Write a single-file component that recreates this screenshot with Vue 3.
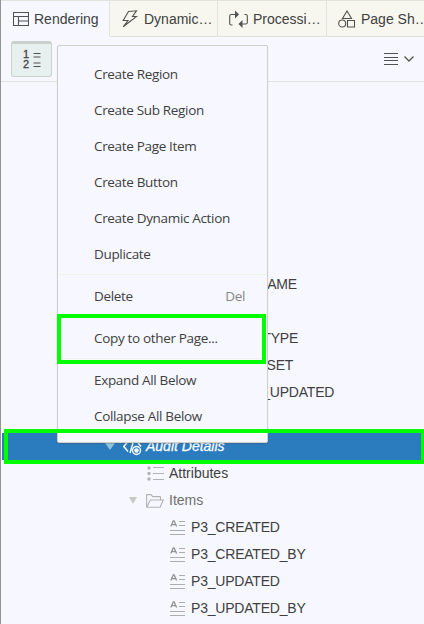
<script setup>
const tabs = [
  { label: 'Rendering', icon: 'layout', active: true },
  { label: 'Dynamic…', icon: 'bolt' },
  { label: 'Processi…', icon: 'process' },
  { label: 'Page Sh…', icon: 'shapes' },
]
const covered = ['P3_NAME', '', 'P3_TYPE', 'P3_ASSET', 'LAST_UPDATED', '']
const items = ['P3_CREATED', 'P3_CREATED_BY', 'P3_UPDATED', 'P3_UPDATED_BY']
const groups = [
  [
    { label: 'Create Region' },
    { label: 'Create Sub Region' },
    { label: 'Create Page Item' },
    { label: 'Create Button' },
    { label: 'Create Dynamic Action' },
    { label: 'Duplicate' },
  ],
  [{ label: 'Delete', key: 'Del' }],
  [{ label: 'Copy to other Page...' }],
  [{ label: 'Expand All Below' }, { label: 'Collapse All Below' }],
]
</script>

<template>
  <div class="page">
    <nav class="tabs">
      <div v-for="t in tabs" :key="t.label" class="tab" :class="[t.icon, { active: t.active }]">
        <svg v-if="t.icon === 'layout'" width="16" height="14" viewBox="0 0 16 14">
          <path d="M.5.5h15v13H.5zM.5 4.5h15M5.5 4.5v9M5.5 9h10" />
        </svg>
        <svg v-else-if="t.icon === 'bolt'" width="16" height="18" viewBox="0 0 16 18">
          <path d="M6.500 1.500 14.500.8 10.500 6.500h4L1.200 16.800 6 10.500H1.200z" />
        </svg>
        <svg v-else-if="t.icon === 'process'" width="19" height="18" viewBox="0 0 19 18">
          <path d="M3.500 15H2.200Q.7 15 .7 13.500V6Q.7 4.500 2.200 4.500H7M15.500 4.500H16.800Q18.300 4.500 18.300 6V12.500Q18.300 14 16.800 14H13" />
          <path class="solid" d="M6 .5v8l4-4zM13.500 10v8l-4-4z" />
        </svg>
        <svg v-else width="18" height="18" viewBox="0 0 18 18">
          <path d="M9 1 13.500 8.500h-9zM9.500 10.500h7v6.500h-7z" /><circle cx="4.200" cy="13.500" r="3.500" />
        </svg>
        <span>{{ t.label }}</span>
      </div>
    </nav>

    <div class="toolbar">
      <button class="sort">
        <svg width="19" height="20" viewBox="0 0 19 20">
          <text x="0" y="8.500">1</text><text x="0" y="19">2</text>
          <path d="M10.500 4.500h7M10.500 8h7M10.500 14h7M10.500 17.500h7" />
        </svg>
      </button>
      <div class="view">
        <svg width="31" height="14" viewBox="0 0 31 14">
          <path d="M0 1.500h14M0 5.500h14M0 8.500h14M0 12.500h14" />
          <path class="chev" d="M20.500 4.500 25 9l4.500-4.500" />
        </svg>
      </div>
    </div>

    <div class="tree">
      <div v-for="(c, i) in covered" :key="i" class="row caps" :class="'hidden' + i"><span>{{ c }}</span></div>
      <div class="row selected">
        <i class="tri"></i>
        <svg width="20" height="17" viewBox="0 0 20 17">
          <path d="M5 2.500.8 7.500 5 12.500M14 2.500l4 5M11 .8 7 14" />
          <circle cx="13.500" cy="11.500" r="4" /><circle cx="13.500" cy="11.500" r="1.600" class="dot" />
        </svg>
        <span>Audit Details</span>
      </div>
      <div class="row attributes">
        <svg width="17" height="15" viewBox="0 0 17 15">
          <path d="M6 1.500h11M6 7.500h11M6 13.500h11" />
          <circle cx="2" cy="2" r="1.700" /><circle cx="2" cy="7.500" r="1.700" /><circle cx="2" cy="13" r="1.700" />
        </svg>
        <span>Attributes</span>
      </div>
      <div class="row folder">
        <i class="tri"></i>
        <svg width="18" height="14" viewBox="0 0 18 14">
          <path d="M.6 13.300V1.200Q.6.600 1.200.6H5l1.800 2h7q.7 0 .7.700V6M.8 13.300 4.300 6H17.300l-3.200 7.300z" />
        </svg>
        <span>Items</span>
      </div>
      <div v-for="it in items" :key="it" class="row item caps">
        <svg width="15" height="16" viewBox="0 0 15 16">
          <path class="letter" d="M.8 6.500 3.300.8h.8L6.600 6.500M1.800 4.700h4" />
          <path d="M9 1.500h6M9 5.500h6M0 10.500h15M0 14.500h15" />
        </svg>
        <span>{{ it }}</span>
      </div>
    </div>

    <div class="menu">
      <div v-for="(g, i) in groups" :key="i" class="group">
        <div v-for="m in g" :key="m.label" class="entry">
          <span>{{ m.label }}</span><kbd v-if="m.key">{{ m.key }}</kbd>
        </div>
      </div>
    </div>
    <div class="mark mark-copy"></div>
    <div class="mark mark-row"></div>
  </div>
</template>

<style>
body { margin: 0; overflow: hidden; }
</style>

<style scoped>
* { box-sizing: border-box; }
.page { position: relative; width: 424px; height: 624px; overflow: hidden; background: #f7f8ff; border-left: 1px solid #929292; font: 14px "Liberation Sans", Arial, sans-serif; color: #404040; }
svg { display: block; flex: none; fill: none; stroke: #50534f; stroke-width: 1.1; }
.tabs { display: flex; height: 37px; border-top: 1px solid #e3e3dc; }
.tab { display: flex; align-items: center; width: 109px; flex: none; padding-left: 12px; gap: 5px; background: #f7f7ef; border-right: 1px solid #e3e3dc; border-bottom: 1px solid #e3e3dc; white-space: nowrap; }
.tab.active { background: #f7f8ff; border-bottom-color: #f7f8ff; }
.tab.bolt { width: 108px; }
.tab.process, .tab.shapes { padding-left: 11px; }
.tab.bolt svg, .tab.process svg { margin-right: 1px; }
.tab.process svg { margin-right: 0; }
.solid { fill: #50534f; stroke: none; }
.toolbar { display: flex; justify-content: space-between; height: 45px; padding: 4px 10px 0; border-bottom: 1px solid #e2e3df; }
.sort { display: flex; width: 41px; height: 36px; padding: 5px 0 0 11px; border: 1px solid #cbd0ce; border-top: 3px solid #cbcfce; border-radius: 3px; background: #e7efef; }
.sort svg text { fill: #444; stroke: #444; stroke-width: .3px; font: 11px "Liberation Sans", Arial, sans-serif; }
.view { padding: 11px 0 0; margin-right: -1px; }
.chev { stroke-width: 1.3; }
.tree { padding-top: 189px; }
.row { display: flex; align-items: center; height: 27px; white-space: nowrap; }
.row span { padding-bottom: 2px; }
.caps span { letter-spacing: -.2px; }
.hidden0 { padding-left: 232px; }
.hidden2 { padding-left: 237px; }
.hidden3 { padding-left: 223px; }
.hidden4 { padding-left: 227px; }
.selected { margin-left: 1px; padding-left: 103px; background: #2b7bbf; color: #fff; font-style: italic; }
.selected svg { stroke: #fff; stroke-width: 1.4; margin: 1px 3px 0 8px; }
.dot { fill: #fff; }
.selected span { -webkit-text-stroke: .25px #fff; }
.tri { width: 0; height: 0; border: 4px solid transparent; border-top: 7px solid #c9c9c4; border-bottom: 0; }
.selected .tri { border-left-width: 5px; border-right-width: 5px; border-top-color: #91c4df; }
.attributes { padding-left: 146px; gap: 5px; }
.attributes svg { stroke: #b2b2b2; }
.attributes circle { fill: #b2b2b2; stroke: none; }
.folder { padding-left: 128px; color: #707070; }
.folder svg { margin: 1px 5px 0 9px; stroke: #b2b2b2; }
.item { padding-left: 169px; gap: 6px; }
.item svg { stroke: #aaafac; margin-top: 0; }
.item .letter { stroke: #8c9290; stroke-width: 1.3; }
.menu { position: absolute; left: 56px; top: 45px; width: 211px; height: 398px; padding: 10px 0 0; background: #f7f8ff; border: 1px solid #ced0ca; border-radius: 2px; box-shadow: 0 1px 1px rgba(80,80,80,.3); font: 13.500px "Open Sans", "Noto Sans", sans-serif; }
.group + .group { border-top: 1px solid #f2f2e9; margin-top: 2px; padding-top: 3px; }
.entry { display: flex; align-items: center; justify-content: space-between; height: 36px; padding: 0 22px 0 36px; white-space: nowrap; letter-spacing: -.33px; }
kbd { font: inherit; color: #858585; }
.mark { position: absolute; border: 4px solid #0f0; }
.mark-copy { left: 56px; top: 314px; width: 209px; height: 50px; }
.mark-row { left: 3px; top: 429px; width: 420px; height: 35px; border-right-width: 3px; }
</style>
